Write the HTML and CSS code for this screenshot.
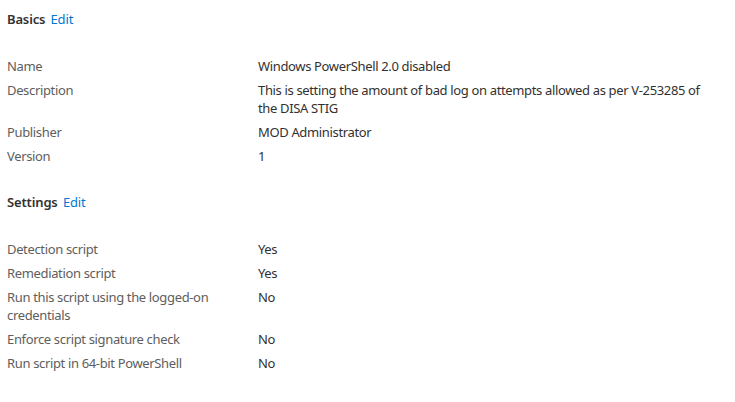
FILE: index.html
```html
<!DOCTYPE html>
<html>
<head>
<meta charset="utf-8">
<link rel="stylesheet" href="styles.css">
</head>
<body>
<div class="page">
  <section class="section">
    <h2 class="heading">Basics <a class="edit" href="#">Edit</a></h2>
    <dl class="props">
      <dt>Name</dt><dd>Windows PowerShell 2.0 disabled</dd>
      <dt>Description</dt><dd>This is setting the amount of bad log on attempts allowed as per V-253285 of the DISA STIG</dd>
      <dt>Publisher</dt><dd>MOD Administrator</dd>
      <dt>Version</dt><dd>1</dd>
    </dl>
  </section>
  <section class="section">
    <h2 class="heading">Settings <a class="edit" href="#">Edit</a></h2>
    <dl class="props">
      <dt>Detection script</dt><dd>Yes</dd>
      <dt>Remediation script</dt><dd>Yes</dd>
      <dt>Run this script using the logged-on credentials</dt><dd>No</dd>
      <dt>Enforce script signature check</dt><dd>No</dd>
      <dt>Run script in 64-bit PowerShell</dt><dd>No</dd>
    </dl>
  </section>
</div>
</body>
</html>
```

FILE: styles.css
```css
html, body {
  margin: 0;
  padding: 0;
  background: #ffffff;
}
.page {
  padding: 9px 0 0 7px;
  font-family: "Noto Sans", "Open Sans", sans-serif;
  font-size: 13px;
  letter-spacing: -0.35px;
  color: #323130;
}
.section {
  margin-bottom: 27px;
}
.heading {
  margin: 0 0 28px 0;
  font-size: 13px;
  line-height: 20px;
  font-weight: 600;
  letter-spacing: -0.15px;
  color: #323130;
}
.edit {
  font-weight: 400;
  color: #0078d4;
  text-decoration: none;
  margin-left: 2px;
}
.props {
  display: grid;
  grid-template-columns: 251px 460px;
  row-gap: 6px;
  margin: 0;
}
.props dt {
  color: #605e5c;
  line-height: 18px;
  padding-right: 30px;
}
.props dd {
  margin: 0;
  line-height: 18px;
  color: #323130;
}
```
